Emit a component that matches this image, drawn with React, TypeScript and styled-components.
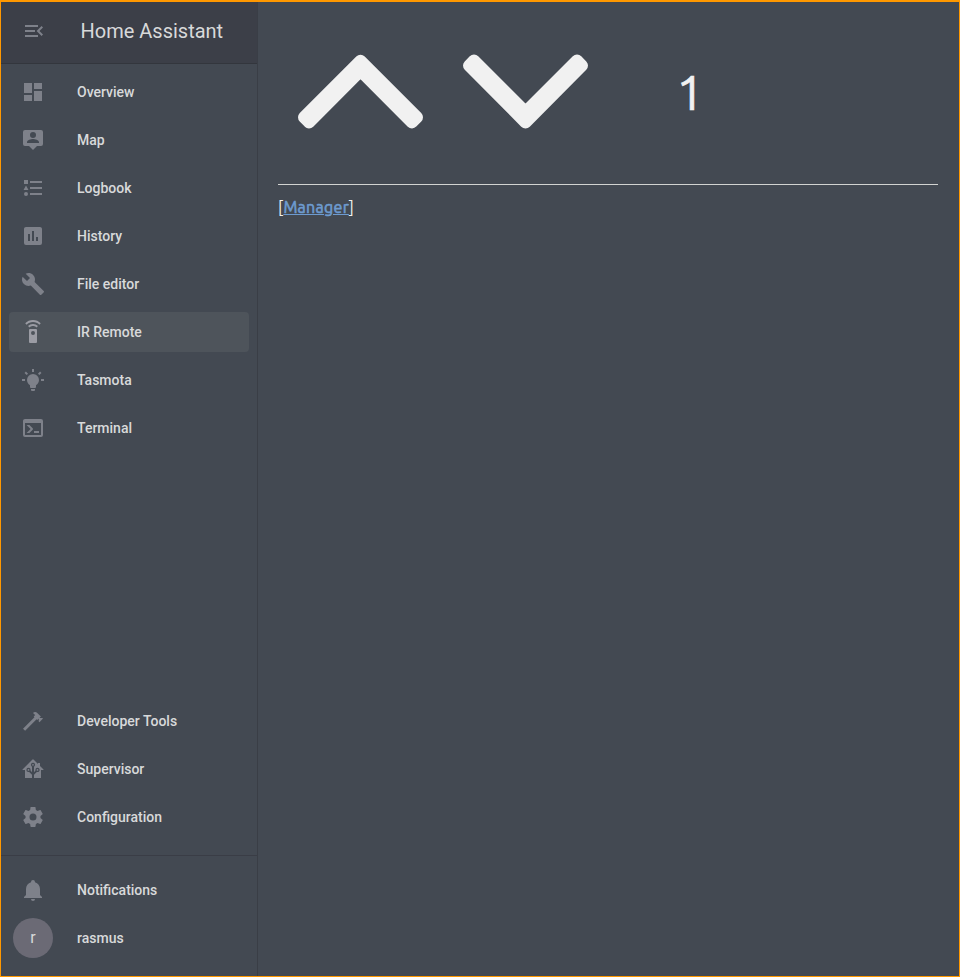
import React from "react";
import styled, { createGlobalStyle } from "styled-components";

const GlobalStyle = createGlobalStyle`
  * { box-sizing: border-box; }
  body { margin: 0; background: #434952; }
`;

const Frame = styled.div`
  display: flex;
  width: 100%;
  height: 977px;
  border: 1px solid #ff9800;
  border-top-width: 2px;
  background: #434952;
  color: #d8d9da;
  font-family: Roboto, sans-serif;
`;

const Sidebar = styled.aside`
  display: flex;
  flex-direction: column;
  flex: none;
  width: 257px;
  border-right: 1px solid #3a3e46;
`;

const Header = styled.header`
  display: flex;
  align-items: center;
  height: 62px;
  padding: 0 0 4px 21px;
  gap: 34.5px;
  border-bottom: 1px solid #33363d;
  background: #3c3f48;
`;

const Title = styled.h1`
  margin: 0;
  font-size: 20px;
  font-weight: 400;
  line-height: 24px;
  white-space: nowrap;
`;

const Nav = styled.nav`
  display: flex;
  flex-direction: column;
  flex: 1;
  gap: 8px;
  padding: 8px 8px 0;
`;

const Row = styled.a<{ $active?: boolean }>`
  display: flex;
  align-items: center;
  flex: none;
  height: 40px;
  padding-left: 12px;
  gap: 32px;
  border-radius: 4px;
  background: ${(p) => (p.$active ? "#4e545b" : "transparent")};
  color: ${(p) => (p.$active ? "#9b9ca4" : "#7e818a")};
`;

const Label = styled.span`
  color: #d8d9da;
  font-size: 14px;
  font-weight: 500;
  line-height: 20px;
`;

const Spacer = styled.div`
  flex: 1;
`;

const Account = styled.div`
  display: flex;
  flex-direction: column;
  gap: 8px;
  margin-top: 18px;
  padding: 14px 8px 18px;
  border-top: 1px solid #3a3d46;
`;

const Profile = styled(Row)`
  padding-left: 4px;
  gap: 24px;
`;

const Avatar = styled.span`
  display: grid;
  place-items: center;
  width: 40px;
  height: 40px;
  padding-bottom: 1px;
  border-radius: 50%;
  background: #6b6a75;
  color: #d8d9da;
  font-size: 16px;
`;

const IconSvg = styled.svg<{ $color?: string }>`
  flex: none;
  width: 24px;
  height: 24px;
  fill: ${(p) => p.$color ?? "currentColor"};
`;

const Main = styled.main`
  flex: 1;
  padding: 32px 21px 0 20px;
  font-family: Ubuntu, "Noto Sans", sans-serif;
  color: #f1f1f1;
`;

const Controls = styled.div`
  display: flex;
  height: 150px;
  padding: 20px 0 0 20px;
`;

const Arrow = styled.svg`
  flex: none;
  width: 125px;
  height: 76px;
  margin-right: 40px;
  fill: #f1f1f1;
  stroke: #f1f1f1;
  stroke-width: 12px;
  stroke-linejoin: round;
`;

const Channel = styled.output`
  width: 125px;
  padding-left: 48.5px;
  font-size: 48px;
  line-height: 76px;
  -webkit-text-stroke: 0.7px #f1f1f1;
`;

const Rule = styled.hr`
  height: 1px;
  margin: 0;
  border: 0;
  background: #d2d3d1;
`;

const Links = styled.p`
  margin: 9px 0 0;
  font-size: 16px;
  line-height: 26px;
  letter-spacing: 0.3px;
`;

const ManagerLink = styled.a`
  color: #6d9bd0;
  text-decoration: underline;
  -webkit-text-stroke: 0.6px currentColor;
`;

const icons = {
  menu: "M21,15.61L19.59,17L14.58,12L19.59,7L21,8.39L17.44,12L21,15.61M3,6H16V8H3V6M3,13V11H13V13H3M3,18V16H16V18H3Z",
  dashboard: "M13,3V9H21V3M13,21H21V11H13M3,21H11V15H3M3,13H11V3H3V13Z",
  map: "M4,2H20A2,2 0 0,1 22,4V16A2,2 0 0,1 20,18H16L12,22L8,18H4A2,2 0 0,1 2,16V4A2,2 0 0,1 4,2M12,4A3,3 0 0,0 9,7A3,3 0 0,0 12,10A3,3 0 0,0 15,7A3,3 0 0,0 12,4M18,15V14.1C18,12.1 14,11 12,11C10,11 6,12.1 6,14.1V15H18Z",
  logbook: "M5,9.5L7.5,14H2.5L5,9.5M3,4H7V8H3V4M5,20A2,2 0 0,0 7,18A2,2 0 0,0 5,16A2,2 0 0,0 3,18A2,2 0 0,0 5,20M9,5V7H21V5H9M9,19H21V17H9V19M9,13H21V11H9V13Z",
  history: "M17,17H15V13H17M13,17H11V7H13M9,17H7V10H9M19,3H5C3.89,3 3,3.89 3,5V19A2,2 0 0,0 5,21H19A2,2 0 0,0 21,19V5C21,3.89 20.1,3 19,3Z",
  wrench: "M22.7,19L13.6,9.9C14.5,7.6 14,4.9 12.1,3C10.1,1 7.1,0.6 4.7,1.7L9,6L6,9L1.6,4.7C0.4,7.1 0.9,10.1 2.9,12.1C4.8,14 7.5,14.5 9.8,13.6L18.9,22.7C19.3,23.1 19.9,23.1 20.3,22.7L22.6,20.4C23.1,20 23.1,19.3 22.7,19Z",
  remote: "M12,0C8.96,0 6.21,1.23 4.22,3.22L5.63,4.63C7.26,3 9.5,2 12,2C14.5,2 16.74,3 18.36,4.64L19.77,3.23C17.79,1.23 15.04,0 12,0M7.05,6.05L8.46,7.46C9.37,6.56 10.62,6 12,6C13.38,6 14.63,6.56 15.54,7.46L16.95,6.05C15.68,4.78 13.93,4 12,4C10.07,4 8.32,4.78 7.05,6.05M12,15A2,2 0 0,1 10,13A2,2 0 0,1 12,11A2,2 0 0,1 14,13A2,2 0 0,1 12,15M15,9H9A1,1 0 0,0 8,10V22A1,1 0 0,0 9,23H15A1,1 0 0,0 16,22V10A1,1 0 0,0 15,9Z",
  bulb: "M12,6A6,6 0 0,1 18,12C18,14.22 16.79,16.16 15,17.2V19A1,1 0 0,1 14,20H10A1,1 0 0,1 9,19V17.2C7.21,16.16 6,14.22 6,12A6,6 0 0,1 12,6M14,21V22A1,1 0 0,1 13,23H11A1,1 0 0,1 10,22V21H14M20,11H23V13H20V11M1,11H4V13H1V11M13,1V4H11V1H13M4.92,3.5L7.05,5.64L5.63,7.05L3.5,4.93L4.92,3.5M16.95,5.63L19.07,3.5L20.5,4.93L18.37,7.05L16.95,5.63Z",
  terminal: "M20,19V7H4V19H20M20,3A2,2 0 0,1 22,5V19A2,2 0 0,1 20,21H4A2,2 0 0,1 2,19V5C2,3.89 2.9,3 4,3H20M13,17V15H18V17H13M9.58,13L5.57,9H8.4L11.7,12.3C12.09,12.69 12.09,13.33 11.7,13.72L8.42,17H5.59L9.58,13Z",
  hammer: "M2,19.63L13.43,8.2L12.72,7.5L14.14,6.07L12,3.89C13.2,2.7 15.09,2.7 16.27,3.89L19.87,7.5L18.45,8.91H21.29L22,9.62L18.45,13.21L17.74,12.5V9.62L16.27,11.04L15.56,10.33L4.13,21.76L2,19.63Z",
  home: "M21.8,13H20V21H13V17.67L15.79,14.88L16.5,15C17.66,15 18.6,14.06 18.6,12.9C18.6,11.74 17.66,10.8 16.5,10.8A2.1,2.1 0 0,0 14.4,12.9L14.5,13.61L13,15.13V9.65C13.66,9.29 14.1,8.6 14.1,7.8A2.1,2.1 0 0,0 12,5.7A2.1,2.1 0 0,0 9.9,7.8C9.9,8.6 10.34,9.29 11,9.65V15.13L9.5,13.61L9.6,12.9A2.1,2.1 0 0,0 7.5,10.8A2.1,2.1 0 0,0 5.4,12.9A2.1,2.1 0 0,0 7.5,15L8.21,14.88L11,17.67V21H4V13H2.25C1.83,13 1.42,13 1.42,12.79C1.43,12.57 1.85,12.15 2.28,11.72L11,3C11.33,2.67 11.67,2.33 12,2.33C12.33,2.33 12.67,2.67 13,3L17,7V6H19V9L21.78,11.78C22.18,12.18 22.59,12.59 22.6,12.8C22.6,13 22.2,13 21.8,13M7.5,12A.9.9 0 0,1 8.4,12.9A.9.9 0 0,1 7.5,13.8A.9.9 0 0,1 6.6,12.9A.9.9 0 0,1 7.5,12M16.5,12C17,12 17.4,12.4 17.4,12.9C17.4,13.4 17,13.8 16.5,13.8A.9.9 0 0,1 15.6,12.9A.9.9 0 0,1 16.5,12M12,6.9C12.5,6.9 12.9,7.3 12.9,7.8C12.9,8.3 12.5,8.7 12,8.7C11.5,8.7 11.1,8.3 11.1,7.8C11.1,7.3 11.5,6.9 12,6.9Z",
  cog: "M12,15.5A3.5,3.5 0 0,1 8.5,12A3.5,3.5 0 0,1 12,8.5A3.5,3.5 0 0,1 15.5,12A3.5,3.5 0 0,1 12,15.5M19.43,12.97C19.47,12.65 19.5,12.33 19.5,12C19.5,11.67 19.47,11.34 19.43,11L21.54,9.37C21.73,9.22 21.78,8.95 21.66,8.73L19.66,5.27C19.54,5.05 19.27,4.96 19.05,5.05L16.56,6.05C16.04,5.66 15.5,5.32 14.87,5.07L14.5,2.42C14.46,2.18 14.25,2 14,2H10C9.75,2 9.54,2.18 9.5,2.42L9.13,5.07C8.5,5.32 7.96,5.66 7.44,6.05L4.95,5.05C4.73,4.96 4.46,5.05 4.34,5.27L2.34,8.73C2.21,8.95 2.27,9.22 2.46,9.37L4.57,11C4.53,11.34 4.5,11.67 4.5,12C4.5,12.33 4.53,12.65 4.57,12.97L2.46,14.63C2.27,14.78 2.21,15.05 2.34,15.27L4.34,18.73C4.46,18.95 4.73,19.03 4.95,18.95L7.44,17.94C7.96,18.34 8.5,18.68 9.13,18.93L9.5,21.58C9.54,21.82 9.75,22 10,22H14C14.25,22 14.46,21.82 14.5,21.58L14.87,18.93C15.5,18.67 16.04,18.34 16.56,17.94L19.05,18.95C19.27,19.03 19.54,18.95 19.66,18.73L21.66,15.27C21.78,15.05 21.73,14.78 21.54,14.63L19.43,12.97Z",
  bell: "M21,19V20H3V19L5,17V11C5,7.9 7.03,5.17 10,4.29C10,4.19 10,4.1 10,4A2,2 0 0,1 12,2A2,2 0 0,1 14,4C14,4.1 14,4.19 14,4.29C16.97,5.17 19,7.9 19,11V17L21,19M14,21A2,2 0 0,1 12,23A2,2 0 0,1 10,21",
};

type IconName = keyof typeof icons;

const Icon = ({ name, color }: { name: IconName; color?: string }) => (
  <IconSvg viewBox="0 0 24 24" $color={color} aria-hidden>
    <path d={icons[name]} />
  </IconSvg>
);

const NavItem = ({ icon, label, active }: { icon: IconName; label: string; active?: boolean }) => (
  <Row $active={active}>
    <Icon name={icon} />
    <Label>{label}</Label>
  </Row>
);

const panels: { icon: IconName; label: string }[] = [
  { icon: "dashboard", label: "Overview" },
  { icon: "map", label: "Map" },
  { icon: "logbook", label: "Logbook" },
  { icon: "history", label: "History" },
  { icon: "wrench", label: "File editor" },
  { icon: "remote", label: "IR Remote" },
  { icon: "bulb", label: "Tasmota" },
  { icon: "terminal", label: "Terminal" },
];

const tools: { icon: IconName; label: string }[] = [
  { icon: "hammer", label: "Developer Tools" },
  { icon: "home", label: "Supervisor" },
  { icon: "cog", label: "Configuration" },
];

export default function App() {
  return (
    <>
      <GlobalStyle />
      <Frame>
        <Sidebar>
          <Header>
            <Icon name="menu" color="#7e818a" />
            <Title>Home Assistant</Title>
          </Header>
          <Nav>
            {panels.map((p) => (
              <NavItem key={p.label} {...p} active={p.label === "IR Remote"} />
            ))}
            <Spacer />
            {tools.map((t) => (
              <NavItem key={t.label} {...t} />
            ))}
          </Nav>
          <Account>
            <NavItem icon="bell" label="Notifications" />
            <Profile>
              <Avatar>r</Avatar>
              <Label>rasmus</Label>
            </Profile>
          </Account>
        </Sidebar>
        <Main>
          <Controls>
            <Arrow viewBox="0 0 125 76">
              <path d="M6 63.3L62.5 6.8L119 63.3L114 68.4L62.5 16.8L11 68.4Z" />
            </Arrow>
            <Arrow viewBox="0 0 125 76">
              <path d="M6 11.6L62.5 68.4L119 11.6L114 6.5L62.5 57.9L11 6.5Z" />
            </Arrow>
            <Channel>1</Channel>
          </Controls>
          <Rule />
          <Links>
            [<ManagerLink>Manager</ManagerLink>]
          </Links>
        </Main>
      </Frame>
    </>
  );
}
